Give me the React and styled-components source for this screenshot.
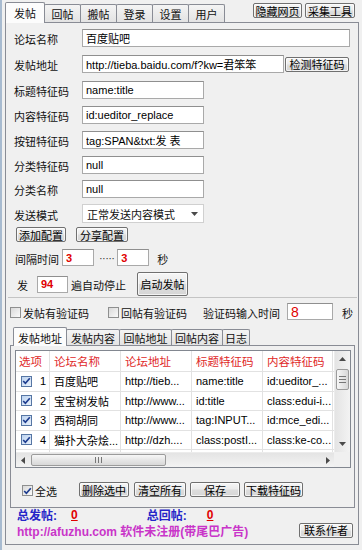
import React from "react";
import styled, { createGlobalStyle } from "styled-components";

const FONT = `"Liberation Sans", "Noto Sans CJK SC", sans-serif`;

const Global = createGlobalStyle`
  html, body { margin: 0; padding: 0; background: #f0f0f0; }
  body { font-family: ${FONT}; font-size: 11px; color: #000; }
  * { box-sizing: border-box; }
`;

const Window = styled.div`
  width: 362px;
  height: 550px;
  border-left: 2px solid #a8bbd0;
  padding: 0 3px 5px 3px;
  background: #f0f0f0;
  display: flex;
  flex-direction: column;
  font-family: ${FONT};
  font-size: 11px;
  color: #111;
`;

const TopBar = styled.div`
  height: 22px;
  flex: none;
  display: flex;
  align-items: flex-end;
  position: relative;
  z-index: 1;
`;

const TabStrip = styled.div`
  display: flex;
  align-items: flex-end;
  height: 100%;
`;

const Tab = styled.div`
  width: ${(p) => p.$w}px;
  height: ${(p) => (p.$active ? p.$h + 3 : p.$h)}px;
  margin-left: ${(p) => (p.$first ? 0 : -1)}px;
  margin-bottom: ${(p) => (p.$active ? -1 : 0)}px;
  border: 1px solid #898c95;
  border-bottom: none;
  border-radius: 2px 2px 0 0;
  background: ${(p) => (p.$active ? "#fcfcfc" : "linear-gradient(#f4f4f4, #e3e3e3)")};
  display: flex;
  align-items: ${(p) => (p.$active ? "flex-start" : "center")};
  padding-top: ${(p) => (p.$active ? 2 : 0)}px;
  justify-content: center;
  font-size: 11px;
  white-space: nowrap;
  position: relative;
  z-index: ${(p) => (p.$active ? 2 : 1)};
`;

const TopButtons = styled.div`
  margin-left: auto;
  align-self: flex-start;
  margin-top: 3px;
  margin-right: 4px;
  display: flex;
  gap: 3px;
`;

const Btn = styled.div`
  width: ${(p) => p.$w}px;
  height: ${(p) => p.$h || 15}px;
  flex: none;
  margin-left: ${(p) => p.$ml || 0}px;
  border: 1px solid #707070;
  border-radius: 2px;
  background: linear-gradient(#f6f6f6, #ebebeb 48%, #dddddd 52%, #d6d6d6);
  box-shadow: inset 0 0 0 1px rgba(255, 255, 255, 0.7);
  display: flex;
  align-items: center;
  justify-content: center;
  font-size: 11px;
  white-space: nowrap;
  color: #000;
`;

const Panel = styled.div`
  height: 523px;
  flex: none;
  border: 1px solid #898c95;
  background: #f0f0f0;
  display: flex;
  flex-direction: column;
`;

const Form = styled.div`
  height: 275px;
  flex: none;
  margin: 0 1px 0 2px;
  padding: 6px 0 0 6px;
  border-bottom: 1px solid #c4c4c4;
  display: flex;
  flex-direction: column;
`;

const Row = styled.div`
  display: flex;
  align-items: center;
  height: ${(p) => p.$h || 18}px;
  margin-top: ${(p) => p.$mt || 0}px;
  padding-left: ${(p) => p.$pl || 0}px;
  flex: none;
`;

const Label = styled.span`
  width: ${(p) => (p.$w ? `${p.$w}px` : "auto")};
  flex: none;
  padding-top: ${(p) => (p.$pt ?? 2)}px;
  margin-left: ${(p) => p.$ml || 0}px;
  white-space: nowrap;
  font-size: 11px;
`;

const TextBox = styled.input`
  width: ${(p) => p.$w}px;
  height: ${(p) => p.$h || 18}px;
  flex: none;
  margin: 0 0 0 ${(p) => p.$ml || 0}px;
  border: 1px solid #a9a9a9;
  border-top-color: #8f8f8f;
  background: #fff;
  padding: 0 3px;
  font-family: ${FONT};
  font-size: ${(p) => p.$fs || 11}px;
  font-weight: ${(p) => (p.$bold ? 700 : 400)};
  color: ${(p) => (p.$red ? "#e00000" : "#000")};
  outline: none;
`;

const SelectBox = styled.div`
  width: 122px;
  height: 19px;
  border: 1px solid #d0d0d0;
  background: #fff;
  display: flex;
  align-items: center;
  padding: 0 5px 0 4px;
  font-size: 11px;
  justify-content: space-between;
`;

const Dashes = styled.span`
  font-size: 11px;
  color: #333;
  margin-left: 5px;
  letter-spacing: -0.6px;
`;

const CheckRow = styled.div`
  height: 17px;
  margin-top: 5px;
  padding-left: 4px;
  display: flex;
  align-items: center;
  flex: none;
`;

const CheckItem = styled.label`
  display: flex;
  align-items: center;
  gap: 2px;
  margin-left: ${(p) => p.$ml || 0}px;
  padding-top: 2px;
  white-space: nowrap;
`;

const Box = styled.span`
  width: 11px;
  height: 11px;
  flex: none;
  border: 1px solid ${(p) => (p.$blue ? "#5676a4" : "#8e8f8f")};
  background: ${(p) =>
    p.$blue
      ? "linear-gradient(135deg, #bcd3f0, #e9f1fb)"
      : "linear-gradient(135deg, #d9d9d9, #fafafa)"};
  display: inline-flex;
  align-items: center;
  justify-content: center;
`;

const InnerTabs = styled.div`
  height: 18px;
  margin-top: 7px;
  padding-left: 7px;
  display: flex;
  align-items: flex-end;
  flex: none;
  position: relative;
  z-index: 1;
`;

const InnerBox = styled.div`
  height: 163px;
  flex: none;
  margin: 0 3px 0 4px;
  border: 1px solid #898c95;
  background: #f0f0f0;
  padding: 4px 3px 0 4px;
  display: flex;
  flex-direction: column;
`;

const Table = styled.div`
  height: 118px;
  flex: none;
  border: 1px solid #828790;
  background: #fff;
  display: grid;
  grid-template-columns: 1fr 16px;
  grid-template-rows: 1fr 15px;
`;

const Viewport = styled.div`
  overflow: hidden;
`;

const TRow = styled.div`
  display: flex;
  height: ${(p) => p.$h || 19.5}px;
  border-bottom: 1px solid #e2e2e2;
`;

const Cell = styled.div`
  width: ${(p) => p.$w}px;
  flex: none;
  border-right: 1px solid #e2e2e2;
  padding-left: ${(p) => p.$pl ?? 4}px;
  display: flex;
  align-items: center;
  gap: 8px;
  white-space: nowrap;
  overflow: hidden;
  color: ${(p) => (p.$head ? "#e02828" : "#000")};
  font-size: ${(p) => (p.$head ? 11.5 : 11)}px;
`;

const VScroll = styled.div`
  background: linear-gradient(90deg, #e4e4e4, #f3f3f3);
  border-left: 1px solid #ececec;
  display: flex;
  flex-direction: column;
  align-items: center;
`;

const HScroll = styled.div`
  background: linear-gradient(#e4e4e4, #f3f3f3);
  border-top: 1px solid #ececec;
  display: flex;
  align-items: center;
`;

const Corner = styled.div`
  background: #f0f0f0;
`;

const Arrow = styled.div`
  width: ${(p) => (p.$horiz ? 13 : 15)}px;
  height: ${(p) => (p.$horiz ? 14 : 16)}px;
  flex: none;
  display: flex;
  align-items: center;
  justify-content: center;
`;

const Thumb = styled.div`
  flex: none;
  width: ${(p) => (p.$horiz ? "135px" : "13px")};
  height: ${(p) => (p.$horiz ? "12px" : "21px")};
  margin: ${(p) => (p.$horiz ? "0 0 0 2px" : "2px 0 0 0")};
  border: 1px solid #9b9b9b;
  border-radius: 2px;
  background: ${(p) =>
    p.$horiz
      ? "linear-gradient(#f7f7f7, #e6e6e6 50%, #d8d8d8)"
      : "linear-gradient(90deg, #f7f7f7, #e6e6e6 50%, #d8d8d8)"};
  display: flex;
  align-items: center;
  justify-content: center;
`;

const Spacer = styled.div`
  flex: 1;
`;

const ActionRow = styled.div`
  height: 15px;
  margin-top: 14px;
  padding-left: 7px;
  display: flex;
  align-items: center;
  flex: none;
`;

const Stats = styled.div`
  height: 13px;
  flex: none;
  padding-left: 11px;
  display: flex;
  align-items: center;
  font-size: 12px;
  font-weight: 700;
`;

const Blue = styled.span`
  color: #2626c8;
  margin-left: ${(p) => p.$ml || 0}px;
`;

const RedNum = styled.span`
  color: #e00000;
  text-decoration: underline;
  margin-left: ${(p) => p.$ml || 0}px;
`;

const Footer = styled.div`
  height: 18px;
  flex: none;
  padding: 0 5px 0 11px;
  display: flex;
  align-items: center;
  justify-content: space-between;
`;

const Promo = styled.span`
  color: #c935c9;
  font-weight: 700;
  font-size: 12px;
  white-space: nowrap;
`;

const Check = () => (
  <svg width="9" height="8" viewBox="0 0 9 8">
    <path d="M1.2 4 L3.4 6.3 L7.8 1.2" fill="none" stroke="#1e3d8f" strokeWidth="1.7" />
  </svg>
);

const CheckBox = ({ checked, blue }) => (
  <Box $blue={blue}>{checked ? <Check /> : null}</Box>
);

const Tri = ({ dir }) => {
  const paths = {
    up: "M0 4 L3.5 0 L7 4 Z",
    down: "M0 0 L7 0 L3.5 4 Z",
    left: "M4 0 L4 7 L0 3.5 Z",
    right: "M0 0 L4 3.5 L0 7 Z",
  };
  const horiz = dir === "left" || dir === "right";
  return (
    <svg width={horiz ? 4 : 7} height={horiz ? 7 : 4} viewBox={horiz ? "0 0 4 7" : "0 0 7 4"}>
      <path d={paths[dir]} fill="#4a4a4a" />
    </svg>
  );
};

const Grip = ({ horiz }) =>
  horiz ? (
    <svg width="7" height="6" viewBox="0 0 7 6">
      <path d="M0.5 0 V6 M3.5 0 V6 M6.5 0 V6" stroke="#777" strokeWidth="1" />
    </svg>
  ) : (
    <svg width="7" height="7" viewBox="0 0 7 7">
      <path d="M0 0.5 H7 M0 3.5 H7 M0 6.5 H7" stroke="#777" strokeWidth="1" />
    </svg>
  );

const fields = [
  { label: "论坛名称", value: "百度贴吧", w: 268, mt: 0 },
  { label: "发帖地址", value: "http://tieba.baidu.com/f?kw=君笨笨", w: 202, mt: 8, btn: "检测特征码" },
  { label: "标题特征码", value: "name:title", w: 122, mt: 8 },
  { label: "内容特征码", value: "id:ueditor_replace", w: 122, mt: 7 },
  { label: "按钮特征码", value: "tag:SPAN&txt:发 表", w: 122, mt: 7 },
  { label: "分类特征码", value: "null", w: 122, mt: 7 },
  { label: "分类名称", value: "null", w: 122, mt: 6 },
];

const cols = [34, 71, 71, 71, 70];
const heads = ["选项", "论坛名称", "论坛地址", "标题特征码", "内容特征码"];
const rows = [
  ["百度贴吧", "http://tieb...", "name:title", "id:ueditor_..."],
  ["宝宝树发帖", "http://www...", "id:title", "class:edui-i..."],
  ["西祠胡同", "http://www...", "tag:INPUT...", "id:mce_edi..."],
  ["猫扑大杂烩...", "http://dzh....", "class:postI...", "class:ke-co..."],
];

export default function App() {
  const outerTabs = [
    { t: "发帖", w: 40 },
    { t: "回帖", w: 37 },
    { t: "搬帖", w: 37 },
    { t: "登录", w: 37 },
    { t: "设置", w: 37 },
    { t: "用户", w: 37 },
  ];
  const innerTabs = [
    { t: "发帖地址", w: 54 },
    { t: "发帖内容", w: 54 },
    { t: "回帖地址", w: 53 },
    { t: "回帖内容", w: 52 },
    { t: "日志", w: 28 },
  ];
  return (
    <>
      <Global />
      <Window>
        <TopBar>
          <TabStrip>
            {outerTabs.map((tb, i) => (
              <Tab key={tb.t} $w={tb.w} $h={18} $first={i === 0} $active={i === 0}>
                {tb.t}
              </Tab>
            ))}
          </TabStrip>
          <TopButtons>
            <Btn $w={49}>隐藏网页</Btn>
            <Btn $w={50}>采集工具</Btn>
          </TopButtons>
        </TopBar>
        <Panel>
          <Form>
            {fields.map((f) => (
              <Row key={f.label} $mt={f.mt}>
                <Label $w={68}>{f.label}</Label>
                <TextBox $w={f.w} value={f.value} readOnly />
                {f.btn ? <Btn $w={64} $ml={1}>{f.btn}</Btn> : null}
              </Row>
            ))}
            <Row $mt={6} $h={19}>
              <Label $w={68}>发送模式</Label>
              <SelectBox>
                <span>正常发送内容模式</span>
                <Tri dir="down" />
              </SelectBox>
            </Row>
            <Row $mt={4} $h={15} $pl={2}>
              <Btn $w={50}>添加配置</Btn>
              <Btn $w={52} $ml={10}>分享配置</Btn>
            </Row>
            <Row $mt={7} $h={17} $pl={1}>
              <Label>间隔时间</Label>
              <TextBox $w={32} $h={17} $ml={3} $red $bold value="3" readOnly />
              <Dashes>·····</Dashes>
              <TextBox $w={32} $h={17} $ml={3} $red $bold value="3" readOnly />
              <Label $ml={8}>秒</Label>
            </Row>
            <Row $mt={6} $h={24} $pl={3}>
              <Label>发</Label>
              <TextBox $w={31} $h={17} $ml={9} $red $bold value="94" readOnly />
              <Label $ml={3}>遍自动停止</Label>
              <Btn $w={51} $h={24} $ml={11}>启动发帖</Btn>
            </Row>
          </Form>

          <CheckRow>
            <CheckItem>
              <CheckBox />
              <span>发帖有验证码</span>
            </CheckItem>
            <CheckItem $ml={19}>
              <CheckBox />
              <span>回帖有验证码</span>
            </CheckItem>
            <Label $ml={16}>验证码输入时间</Label>
            <TextBox $w={46} $h={17} $ml={7} $red $fs={14} value="8" readOnly />
            <Label $ml={9}>秒</Label>
          </CheckRow>

          <InnerTabs>
            {innerTabs.map((tb, i) => (
              <Tab key={tb.t} $w={tb.w} $h={16} $first={i === 0} $active={i === 0}>
                {tb.t}
              </Tab>
            ))}
          </InnerTabs>

          <InnerBox>
            <Table>
              <Viewport>
                <TRow $h={21}>
                  {heads.map((h, i) => (
                    <Cell key={h} $w={cols[i]} $head $pl={i === 0 ? 3 : 4}>
                      {h}
                    </Cell>
                  ))}
                </TRow>
                {rows.map((r, ri) => (
                  <TRow key={ri}>
                    <Cell $w={cols[0]} $pl={5}>
                      <CheckBox checked blue />
                      <span>{ri + 1}</span>
                    </Cell>
                    {r.map((c, ci) => (
                      <Cell key={ci} $w={cols[ci + 1]}>
                        {c}
                      </Cell>
                    ))}
                  </TRow>
                ))}
                <TRow>
                  {cols.map((w, i) => (
                    <Cell key={i} $w={w} />
                  ))}
                </TRow>
              </Viewport>
              <VScroll>
                <Arrow>
                  <Tri dir="up" />
                </Arrow>
                <Thumb>
                  <Grip />
                </Thumb>
                <Spacer />
                <Arrow>
                  <Tri dir="down" />
                </Arrow>
              </VScroll>
              <HScroll>
                <Arrow $horiz>
                  <Tri dir="left" />
                </Arrow>
                <Thumb $horiz>
                  <Grip horiz />
                </Thumb>
                <Spacer />
                <Arrow $horiz>
                  <Tri dir="right" />
                </Arrow>
              </HScroll>
              <Corner />
            </Table>
            <ActionRow>
              <CheckItem>
                <CheckBox checked />
                <span>全选</span>
              </CheckItem>
              <Btn $w={50} $ml={22}>删除选中</Btn>
              <Btn $w={52} $ml={5}>清空所有</Btn>
              <Btn $w={50} $ml={4}>保存</Btn>
              <Btn $w={59} $ml={4}>下载特征码</Btn>
            </ActionRow>
          </InnerBox>

          <Stats>
            <Blue>总发帖:</Blue>
            <RedNum $ml={14}>0</RedNum>
            <Blue $ml={69}>总回帖:</Blue>
            <RedNum $ml={20}>0</RedNum>
          </Stats>

          <Footer>
            <Promo>http://afuzhu.com 软件未注册(带尾巴广告)</Promo>
            <Btn $w={54} $h={15}>联系作者</Btn>
          </Footer>
        </Panel>
      </Window>
    </>
  );
}
